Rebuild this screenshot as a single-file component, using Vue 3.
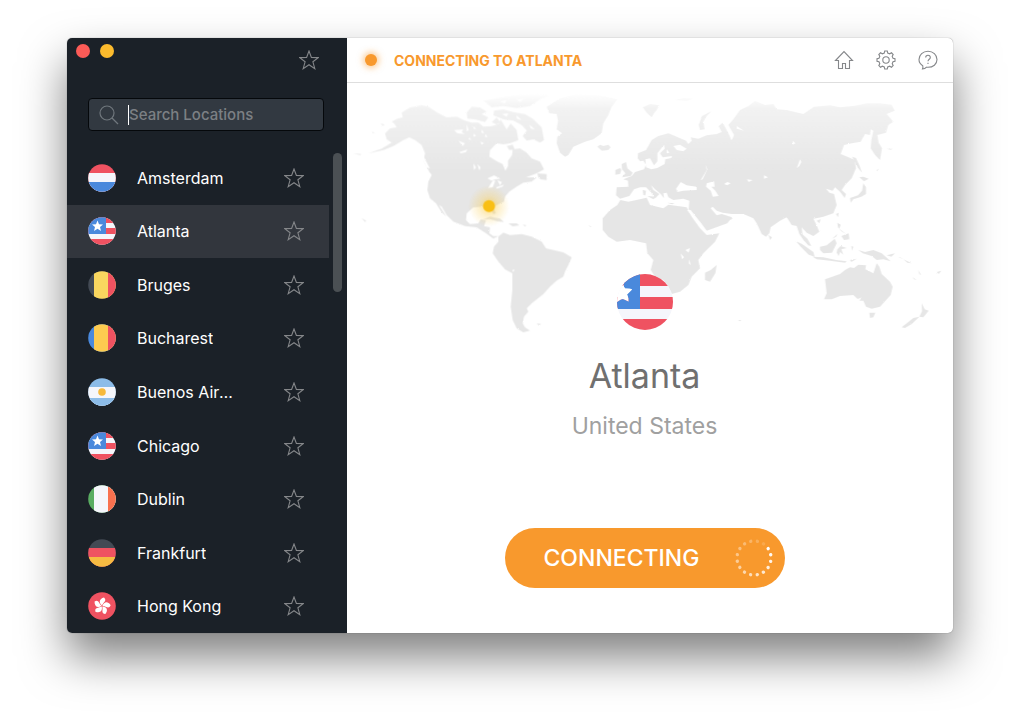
<template>
  <div class="desktop">
    <main class="window">
      <aside class="sidebar">
        <div class="titlebar">
          <div class="traffic">
            <button class="light red" aria-label="Close"></button>
            <button class="light yellow" aria-label="Minimize"></button>
          </div>
          <button class="icon-btn" aria-label="Favorites">
            <svg class="star" viewBox="0 0 20 20"><path :d="starPath" /></svg>
          </button>
        </div>

        <label class="search">
          <svg class="search-icon" viewBox="0 0 20 20">
            <circle cx="8" cy="8" r="7" />
            <path d="M13 13L19 19" />
          </svg>
          <span class="caret"></span>
          <input v-model="query" type="text" placeholder="Search Locations" aria-label="Search Locations" />
        </label>

        <div class="list-area">
          <ul class="list">
            <li v-for="item in filtered" :key="item.name" class="row" :class="{ active: item.name === selected }">
              <button class="location" @click="selected = item.name">
                <svg class="flag" viewBox="0 0 28 28">
                  <g clip-path="url(#flag-clip)">
                    <template v-if="item.flag === 'us'">
                      <rect width="28" height="28" fill="#f5f6fb" />
                      <rect width="28" height="6" fill="#ef5261" />
                      <rect y="11" width="28" height="6" fill="#ef5261" />
                      <rect y="22" width="28" height="6" fill="#ef5261" />
                      <rect width="18" height="17" fill="#4a89dc" />
                      <path d="M9.500 3.500L11 7.300L15 7.500L12 10L13 14L9.500 11.800L6 14L7 10L4 7.500L8 7.300Z" fill="#fff" />
                    </template>
                    <template v-else-if="item.flag === 'hk'">
                      <rect width="28" height="28" fill="#ef5261" />
                      <path
                        v-for="n in 5"
                        :key="n"
                        d="M14 13.500C10 11.500 9.800 7.500 14.500 5.300C18.500 8 14.500 9.800 14 13.500Z"
                        :transform="`rotate(${n * 72 - 62} 14 14)`"
                        fill="#fff"
                      />
                    </template>
                    <template v-else>
                      <rect
                        v-for="(band, i) in item.bands"
                        :key="i"
                        :x="item.vertical ? band[0] : 0"
                        :y="item.vertical ? 0 : band[0]"
                        width="28"
                        height="28"
                        :fill="band[1]"
                      />
                      <circle v-if="item.sun" cx="14" cy="14" r="3.800" fill="#f6b93c" />
                    </template>
                  </g>
                </svg>
                <span class="name">{{ item.name }}</span>
              </button>
              <button class="icon-btn" :aria-label="`Add ${item.name} to favorites`">
                <svg class="star" viewBox="0 0 20 20"><path :d="starPath" /></svg>
              </button>
            </li>
          </ul>
          <div class="scroll-track"><div class="scroll-thumb"></div></div>
        </div>
      </aside>

      <section class="panel">
        <header class="header">
          <span class="status-dot"></span>
          <h1>CONNECTING TO ATLANTA</h1>
          <nav class="tools">
            <button class="icon-btn" aria-label="Home">
              <svg viewBox="0 0 20 20"><path d="M1.500 10.500L10 1.500L18.500 10.500H15.500V18.500H11.500V13.500H8.500V18.500H4.500V10.500Z" /></svg>
            </button>
            <button class="icon-btn" aria-label="Settings">
              <svg viewBox="0 0 20 20">
                <path d="M8.300 3L8.700 1H11.300L11.700 3L13.700 3.800L15.500 2.800L17.200 4.500L16.200 6.300L17 8.300L19 8.700V11.300L17 11.700L16.200 13.700L17.200 15.500L15.500 17.200L13.700 16.200L11.700 17L11.300 19H8.700L8.300 17L6.300 16.200L4.500 17.200L2.800 15.500L3.800 13.700L3 11.700L1 11.300V8.700L3 8.300L3.800 6.300L2.800 4.500L4.500 2.800L6.300 3.800Z" />
                <circle cx="10" cy="10" r="3.200" />
              </svg>
            </button>
            <button class="icon-btn" aria-label="Help">
              <svg viewBox="0 0 20 20">
                <path d="M4.700 15.700C2.300 14.300 1 12.100 1 9.600C1 4.900 5 1.300 10 1.300S19 4.900 19 9.600S15 17.300 10 17.300C9.500 17.300 9 17.300 8.500 17.200C7.500 18.300 6.300 18.900 4.500 19C5 18 5.100 17 4.700 15.700Z" />
                <path d="M7.700 7.500C7.700 4.500 12.300 4.500 12.300 7.400C12.300 9.300 10 9.200 10 11.300M10 12.700V14" />
              </svg>
            </button>
          </nav>
        </header>

        <div class="hero">
          <svg class="map" viewBox="0 0 1818 771" aria-hidden="true">
            <defs>
              <linearGradient id="land" gradientUnits="userSpaceOnUse" x1="0" y1="10" x2="0" y2="250">
                <stop offset="0" stop-color="#fff" />
                <stop offset="0.200" stop-color="#f2f2f2" />
                <stop offset="1" stop-color="#e6e6e6" />
              </linearGradient>
              <radialGradient id="glow">
                <stop offset="0" stop-color="#f9c21a" stop-opacity="0.600" />
                <stop offset="0.500" stop-color="#fad05a" stop-opacity="0.300" />
                <stop offset="1" stop-color="#fad05a" stop-opacity="0" />
              </radialGradient>
              <filter id="coast" x="0" y="0" width="1" height="1" color-interpolation-filters="sRGB">
                <feTurbulence type="fractalNoise" baseFrequency="0.150" numOctaves="2" seed="4" />
                <feDisplacementMap in="SourceGraphic" scale="5" xChannelSelector="R" yChannelSelector="G" />
              </filter>
            </defs>
            <g filter="url(#coast)">
              <g v-for="(region, i) in regions" :key="i" :transform="`translate(${region.x} 21)`">
                <path :d="region.land" fill="url(#land)" />
                <path :d="region.water" fill="#fff" />
              </g>
            </g>
            <circle cx="426" cy="369" r="62" fill="url(#glow)" />
            <circle cx="426" cy="369" r="18" fill="#f9bf15" />
          </svg>

          <svg class="big-flag" viewBox="0 0 56 56">
            <g clip-path="url(#big-flag-clip)">
              <rect width="56" height="56" fill="#f5f6fb" />
              <rect width="56" height="12" fill="#ef5261" />
              <rect y="23" width="56" height="12" fill="#ef5261" />
              <rect y="45" width="56" height="11" fill="#ef5261" />
              <path d="M23 0V35H0V28C2 26.500 4 25 6 25Q9 26 11.500 27.500Q12 24 10 20.500L15 15.500Q14 14.500 8 14.500Q7 13 6.500 11V0Z" fill="#4a89dc" />
              <path d="M0 28C2 26.500 4 25 6 25Q9 26 11.500 27.500Q12 24 10 20.500L15 15.500Q14 14.500 8 14.500Q7 13 6.500 11L0 9Z" fill="#fff" />
            </g>
          </svg>
        </div>

        <div class="details">
          <h2>Atlanta</h2>
          <p class="country">United States</p>
          <button class="connect">
            <span>CONNECTING</span>
            <svg class="spinner" viewBox="0 0 38 38">
              <circle
                v-for="n in 16"
                :key="n"
                cx="36"
                cy="19"
                r="1.700"
                :transform="`rotate(${n * 22.5 - 56} 19 19)`"
                :opacity="n === 16 ? 0.15 : 1.05 - n * 0.055"
              />
            </svg>
          </button>
        </div>
      </section>
    </main>

    <svg class="defs" width="0" height="0" aria-hidden="true">
      <clipPath id="flag-clip"><circle cx="14" cy="14" r="13.800" /></clipPath>
      <clipPath id="big-flag-clip"><circle cx="28" cy="28" r="28" /></clipPath>
    </svg>
  </div>
</template>

<script setup>
import { ref, computed } from 'vue';

const query = ref('');
const selected = ref('Atlanta');

const starPath = 'M10 1L12.400 7.400L19.200 7.600L13.900 11.800L15.800 18.600L10 14.700L4.200 18.600L6.100 11.800L0.800 7.600L7.600 7.400Z';

// bands: [start offset, colour], each one painted over the previous
const locations = ref([
  { name: 'Amsterdam', bands: [[0, '#ef5261'], [9, '#f5f6fb'], [18, '#4a89dc']] },
  { name: 'Atlanta', flag: 'us' },
  { name: 'Bruges', vertical: true, bands: [[0, '#434a54'], [6, '#f9d65f'], [20, '#ef5261']] },
  { name: 'Bucharest', vertical: true, bands: [[0, '#4a89dc'], [6, '#fdcb50'], [20, '#ef5261']] },
  { name: 'Buenos Aires', sun: true, bands: [[0, '#8cbce8'], [9, '#f5f6fb'], [20, '#8cbce8']] },
  { name: 'Chicago', flag: 'us' },
  { name: 'Dublin', vertical: true, bands: [[0, '#5aad62'], [6, '#f5f6fb'], [20, '#f9714f']] },
  { name: 'Frankfurt', bands: [[0, '#434a54'], [9, '#ef5261'], [18, '#f6bb42']] },
  { name: 'Hong Kong', flag: 'hk' }
]);

const filtered = computed(() =>
  locations.value.filter((item) => item.name.toLowerCase().includes(query.value.toLowerCase()))
);

const regions = [
  // Americas
  {
    x: 9,
    land:
      'M155 68L180 52L215 45L235 50L262 68L290 82L320 80L345 92L365 98L385 98L400 110L425 108L445 102L452 88L470 118L482 100L500 120L505 150L480 160L460 163L440 160L420 180L418 200L440 213L458 222L466 242L474 228L474 212L486 195L488 178L510 175L530 188L545 205L570 215L582 238L560 250L528 262L560 262L545 275L520 278L500 290L478 305L465 320L462 335L440 345L430 352L438 370L430 372L420 354L400 350L370 352L350 370L348 390L360 402L385 400L392 388L408 390L402 408L420 412L418 430L430 438L445 438L430 446L405 428L380 412L345 408L310 395L290 375L275 350L267 345L289 380L275 367L258 340L240 325L232 300L235 275L245 255L235 240L220 212L225 190L215 165L195 150L178 142L160 150L130 168L100 180L55 190L95 176L125 158L110 148L105 130L120 115L140 112L132 100L125 95L142 86L158 82Z' +
      'M445 440L460 428L480 435L515 432L545 440L575 455L588 475L640 487L665 502L655 525L645 545L640 560L620 572L600 590L580 612L560 628L545 640L530 655L535 665L522 680L518 700L525 712L540 722L520 727L500 715L488 690L482 650L487 600L487 550L465 538L445 515L428 490L432 470L445 455Z' +
      'M350 68L365 50L390 52L410 65L395 72L415 82L405 96L375 88L352 86Z' +
      'M432 62L460 58L490 66L525 72L548 86L575 112L582 150L570 158L550 148L530 152L518 138L530 122L515 105L490 92L460 88L430 76Z' +
      'M400 32L440 24L490 16L560 10L600 16L570 28L540 48L500 54L460 48L425 52Z' +
      'M440 82L450 96L440 104L425 96ZM470 168L488 164L494 178L478 180Z' +
      'M562 250L590 252L590 270L572 268L565 262Z' +
      'M400 388L420 380L450 386L462 396L440 393L420 387ZM475 400L500 400L508 406L488 409ZM518 404L530 406L524 409Z' +
      'M92 100L104 104L98 108ZM66 125L74 128L68 130ZM10 190L35 192L30 195ZM34 384L48 392L46 396ZM560 700L574 702L566 707Z' +
      'M236 238L252 248L250 258L238 246Z',
    water:
      'M312 120L340 118L335 126L345 132L322 130ZM325 152L345 160L338 168ZM328 186L352 178L348 186L332 190Z' +
      'M370 220L378 232L372 240ZM382 222L392 232L388 242Z' +
      'M412 265L432 256L452 266L436 268L424 272ZM428 272L436 272L428 292L414 294ZM442 270L456 276L450 286ZM438 292L462 284L458 290L440 296Z' +
      'M350 102L356 120L350 124ZM372 108L378 118L370 116ZM396 118L402 130L394 128ZM408 132L412 142L404 140ZM392 154L402 160L394 164ZM372 130L378 138L370 140ZM358 142L364 150L356 148Z' +
      'M218 188L224 205L240 236L230 232L218 208Z' +
      'M455 72L475 70L470 80ZM500 76L515 90L500 86ZM538 104L555 118L542 116ZM450 35L470 30L464 40ZM500 30L520 26L512 36Z' +
      'M486 540L494 538L490 546Z'
  },
  // Europe, Africa and Asia
  {
    x: 579,
    land:
      'M20 50L60 25L110 12L180 16L232 28L215 50L205 75L190 100L185 130L160 148L135 155L100 170L85 195L75 200L60 188L50 160L52 140L66 130L50 118L54 92L50 72L28 70Z' +
      'M172 170L180 164L190 168L205 164L212 172L205 180L185 182Z' +
      'M308 52L330 42L358 46L350 60L342 70L335 82L320 68ZM405 30L430 24L460 26L440 32Z' +
      'M245 222L258 216L262 235L278 248L272 258L246 262L256 250L246 238ZM226 240L240 234L244 240L240 252L226 254Z' +
      'M476 105L486 78L514 64L500 78L490 95L494 118L480 120Z' +
      'M293 205L294 190L318 180L335 150L355 138L385 130L410 140L438 152L445 162L455 152L452 142L475 146L500 136L530 132L545 126L536 108L548 98L560 120L575 150L582 135L565 105L580 88L600 60L625 48L645 33L675 45L700 42L710 58L740 60L790 72L822 50L870 46L900 52L945 47L980 40L1020 40L1055 44L1064 62L1040 72L1060 95L1045 105L1038 128L1012 135L1016 158L1026 175L1020 210L1005 195L992 175L994 150L1000 122L992 118L990 135L975 132L962 155L935 160L912 165L902 192L922 200L944 210L948 235L935 265L915 285L905 300L918 312L914 324L900 305L885 292L878 302L858 296L868 308L882 312L890 345L880 370L850 380L832 384L820 386L828 402L838 425L820 438L800 428L785 412L788 438L808 466L792 452L778 432L770 408L755 405L740 382L720 392L692 412L688 430L678 440L665 432L650 400L640 385L610 372L575 372L548 368L530 362L518 350L512 355L530 376L545 372L576 382L562 400L500 422L480 395L460 372L446 358L448 332L430 326L400 330L385 322L380 308L370 310L372 325L362 312L345 298L333 286L340 300L358 312L346 325L332 306L318 292L300 292L282 298L268 318L240 326L228 316L230 292L265 290L264 272L250 268L275 258L285 246L312 238L318 224L310 212L300 214Z' +
      'M241 330L265 335L320 323L330 345L370 355L385 344L440 352L455 380L480 415L500 435L538 430L525 455L490 490L475 510L480 535L455 560L445 585L420 605L395 612L385 590L370 570L345 560L332 540L340 510L322 490L318 460L270 450L230 455L205 440L188 420L188 385L210 360L232 345Z' +
      'M530 525L526 550L510 575L495 570L495 548L512 540ZM322 318L350 320L340 328ZM308 300L318 302L316 316L310 315ZM382 338L404 340L396 343Z' +
      'M686 436L696 442L690 450ZM145 405L156 412L150 410Z',
    water:
      'M318 232L316 208L330 205L342 226L352 214L352 190L372 164L374 176L360 190L368 202L396 198L394 204L376 208L374 222L352 234L334 238Z' +
      'M408 296L422 276L440 286L470 290L470 300L430 302L412 306ZM500 280L522 274L524 290L514 290L526 302L536 318L518 320L512 302L498 290Z' +
      'M552 282L562 276L572 280L562 286ZM441 360L452 360L502 426L494 426Z' +
      'M400 168L410 180L430 184L440 176L420 164ZM380 178L388 188L380 190Z' +
      'M436 480L450 474L446 488ZM422 490L432 502L426 508ZM448 508L452 526L446 520Z' +
      'M770 235L780 208L784 216L778 228ZM672 256L684 262L672 266ZM620 268L638 270L626 276ZM758 152L766 160L758 164ZM738 205L748 214ZM590 108L612 122L590 116ZM570 130L580 140L572 150Z' +
      'M482 270L500 240L496 224L502 238L488 268Z'
  },
  // Far East and Oceania
  {
    x: 1149,
    land:
      'M285 568L330 552L345 540L360 532L372 534L385 524L408 526L406 538L430 550L440 520L448 530L455 552L480 575L488 590L482 615L450 650L425 656L408 650L400 632L388 632L370 615L330 618L305 628L282 628L290 610Z' +
      'M418 668L436 668L430 682L420 684Z' +
      'M575 640L584 658L596 662L580 682L568 680L576 664ZM515 712L550 684L568 680L545 702L525 714Z' +
      'M270 470L290 466L314 446L320 460L306 488L280 490L270 480Z' +
      'M198 454L216 462L250 486L254 500L236 494L212 470ZM248 500L280 502L318 510L350 514L345 518L300 512L260 508Z' +
      'M214 430L232 446L244 468L234 466L218 444Z' +
      'M322 478L332 468L350 474L334 478L340 494L330 486L326 498L320 488Z' +
      'M385 480L405 486L430 480L455 490L482 514L460 508L440 510L425 498L398 490ZM470 496L495 490L484 500ZM360 510L380 506L364 516ZM364 468L370 470L366 482Z' +
      'M322 398L332 404L328 416L348 432L334 424L324 412ZM334 438L356 430L358 448L342 450ZM306 446L322 432L318 440ZM318 372L326 368L324 382ZM260 392L272 388L268 400Z' +
      'M400 280L408 292L408 312L394 320L370 328L362 338L360 324L384 316L396 302ZM388 262L400 260L416 266L402 274ZM366 200L378 204L388 226L396 248L384 234Z' +
      'M470 176L488 176L482 179ZM505 500L520 506L510 504ZM520 508L545 520L532 518ZM548 562L560 570L552 568ZM564 540L574 556L568 552ZM620 546L634 542L626 552ZM24 690L34 690L30 694ZM440 240L446 236L442 244ZM0 380L8 386L0 390Z',
    water: 'M380 626L388 634L394 622L386 626Z'
  }
];
</script>

<style>
body {
  margin: 0;
  background: #fff;
}
</style>

<style scoped>
.desktop {
  box-sizing: border-box;
  display: flex;
  min-height: 100vh;
  padding: 38px 67px 95px;
  font-family: Inter, "Noto Sans", sans-serif;
  overflow: hidden;
}

button {
  padding: 0;
  border: none;
  background: none;
  font: inherit;
  color: inherit;
  cursor: pointer;
}

.window {
  flex: 1;
  display: flex;
  min-width: 0;
  border-radius: 5px;
  background: #fff;
  box-shadow: 0 0 1px rgba(0, 0, 0, 0.5), 0 24px 46px rgba(0, 0, 0, 0.5);
}

.sidebar {
  flex: none;
  display: flex;
  flex-direction: column;
  width: 280px;
  border-radius: 5px 0 0 5px;
  background: #1b2128;
  color: #fff;
}

.titlebar {
  display: flex;
  justify-content: space-between;
  height: 60px;
  padding: 0 28px 0 9px;
}

.traffic {
  display: flex;
  gap: 10px;
  padding-top: 6px;
}

.light {
  width: 14px;
  height: 14px;
  border-radius: 50%;
}

.red {
  background: #fc5b57;
}

.yellow {
  background: #fcbb2d;
}

.icon-btn {
  display: flex;
  align-items: center;
}

.icon-btn svg {
  width: 20px;
  height: 20px;
  fill: none;
  stroke: #85878a;
  stroke-width: 1.1;
}

.titlebar .icon-btn {
  height: 44px;
}

.search {
  display: flex;
  align-items: center;
  box-sizing: border-box;
  height: 33px;
  margin: 0 23px 0 21px;
  padding: 0 10px;
  border: 1px solid #05080b;
  border-radius: 4px;
  background: #323941;
}

.search-icon {
  width: 20px;
  height: 20px;
  margin-right: 9px;
  fill: none;
  stroke: #70777d;
  stroke-width: 1.2;
}

.caret {
  width: 1px;
  height: 20px;
  background: #fff;
}

.search input {
  flex: 1;
  min-width: 0;
  padding: 0;
  border: none;
  outline: none;
  background: none;
  color: #fff;
  font: 500 15px Inter, sans-serif;
}

.search input::placeholder {
  color: #7c8084;
  opacity: 1;
}

.list-area {
  flex: 1;
  display: flex;
  margin-top: 20px;
}

.list {
  flex: 1;
  display: grid;
  grid-auto-rows: 1fr;
  min-width: 0;
  margin: 0;
  padding: 0;
  list-style: none;
}

.row {
  display: flex;
  align-items: center;
  justify-content: space-between;
  padding: 0 25px 0 21px;
}

.row.active {
  background: #32363d;
}

.location {
  display: flex;
  align-items: center;
  gap: 21px;
  min-width: 0;
  text-align: left;
}

.flag {
  flex: none;
  width: 28px;
  height: 28px;
}

.name {
  max-width: 97px;
  overflow: hidden;
  text-overflow: ellipsis;
  white-space: nowrap;
  font-size: 16px;
  line-height: 24px;
}

.scroll-track {
  width: 9px;
  margin: 2px 5px 0 4px;
}

.scroll-thumb {
  height: 139px;
  border-radius: 5px;
  background: #4b5054;
}

.panel {
  flex: 1;
  display: flex;
  flex-direction: column;
  min-width: 0;
}

.header {
  display: flex;
  align-items: center;
  box-sizing: border-box;
  height: 45px;
  padding: 0 15px 0 18px;
  border-bottom: 1px solid #dedede;
}

.status-dot {
  width: 12px;
  height: 12px;
  margin-right: 17px;
  border-radius: 50%;
  background: #f8992d;
  box-shadow: 0 0 6px 2px rgba(248, 153, 45, 0.5);
}

h1 {
  margin: 0;
  color: #f8992d;
  font-size: 14px;
  font-weight: 700;
}

.tools {
  display: flex;
  gap: 22px;
  margin-left: auto;
}

.hero {
  display: grid;
}

.map,
.big-flag {
  grid-area: 1 / 1;
}

.map {
  width: 100%;
}

.big-flag {
  align-self: end;
  justify-self: center;
  width: 56px;
  height: 56px;
  padding: 0 11px 10px 0;
}

.details {
  display: flex;
  flex-direction: column;
  align-items: center;
  padding: 14px 11px 0 0;
}

h2 {
  margin: 0;
  color: #707070;
  font-size: 34px;
  font-weight: 400;
  line-height: 44px;
}

.country {
  margin: 12px 0 0;
  color: #a0a0a0;
  font-size: 23px;
  line-height: 32px;
}

.connect {
  display: flex;
  align-items: center;
  justify-content: space-between;
  box-sizing: border-box;
  width: 280px;
  height: 60px;
  margin-top: 86px;
  padding: 0 12px 0 39px;
  border-radius: 30px;
  background: #f8992d;
  color: #fff;
  font-size: 23px;
  font-weight: 500;
}

.spinner {
  width: 38px;
  height: 38px;
  fill: #fff;
}

.defs {
  position: absolute;
}
</style>
